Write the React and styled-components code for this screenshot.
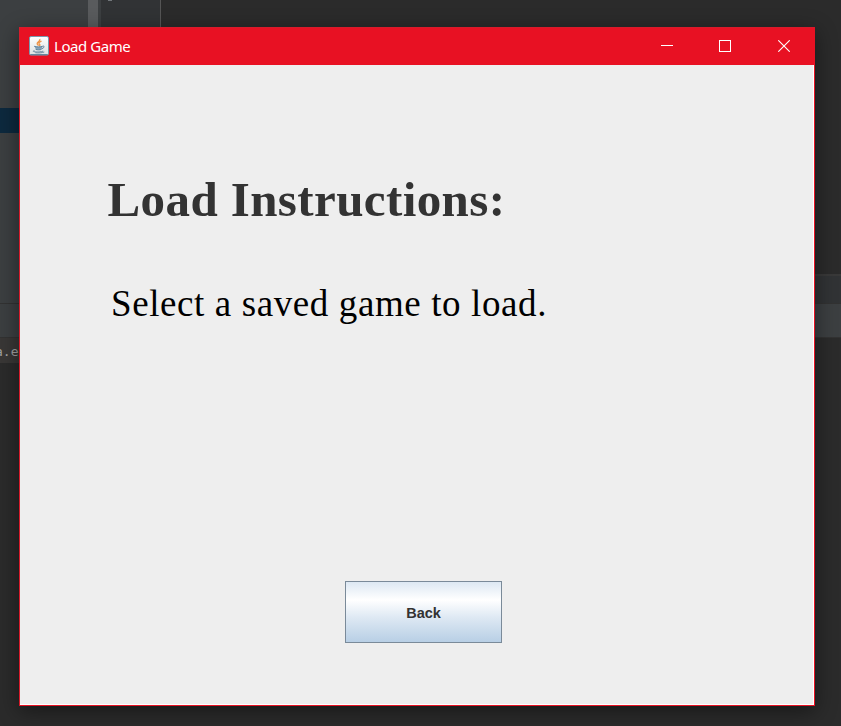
import React from "react";
import styled, { createGlobalStyle } from "styled-components";

const GlobalStyle = createGlobalStyle`
  * { box-sizing: border-box; }
  body { margin: 0; overflow: hidden; background: #2b2b2b; }
`;

const Desktop = styled.div`
  position: relative;
  width: 841px;
  height: 726px;
  overflow: hidden;
  background: #2b2b2b;
`;

const Workspace = styled.div`
  display: flex;
  height: 303px;
`;

const ProjectPanel = styled.div`
  width: 88px;
  padding-top: 108px;
  background: #3c3f41;
`;

const SelectedRow = styled.div`
  height: 25px;
  background: #0d293e;
`;

const Scrollbar = styled.div`
  width: 13px;
  background: #3c3f41;
  border-left: 10px solid #595b5d;
`;

const Gutter = styled.div`
  width: 60px;
  padding-left: 7px;
  background: #313335;
  border-right: 1px solid #555555;
`;

const GutterMark = styled.div`
  width: 4px;
  height: 1px;
  background: #71767a;
`;

const Editor = styled.div`
  flex: 1;
  display: flex;
  flex-direction: column;
  justify-content: flex-end;
`;

const Breadcrumbs = styled.div`
  height: 29px;
  background: #313335;
  border-top: 2px solid #393939;
`;

const ToolHeader = styled.div`
  height: 35px;
  background: #3c3f41;
  border-top: 1px solid #323232;
  border-bottom: 1px solid #323232;
`;

const Console = styled.div`
  width: 60px;
  height: 25px;
  overflow: hidden;
  background: #393736;
  color: #a1a1a1;
  font: 13px/28px "DejaVu Sans Mono", monospace;
  text-indent: -5px;
`;

const Window = styled.main`
  position: absolute;
  left: 19px;
  top: 27px;
  width: 796px;
  height: 679px;
  display: flex;
  flex-direction: column;
  border: 1px solid #e81123;
  border-color: #d81b2b #e81123 #e81123 #d81b2b;
  background: #eeeeee;
  box-shadow: 0 5px 20px rgba(0, 0, 0, 0.45);
`;

const TitleBar = styled.header`
  display: flex;
  align-items: center;
  height: 37px;
  flex: none;
  padding: 0 1px 1px 9px;
  background: #e81123;
  color: #ffffff;
`;

const Title = styled.span`
  margin-left: 5px;
  font: 15px/20px "Noto Sans", sans-serif;
  letter-spacing: -0.45px;
  flex: 1;
`;

const Control = styled.button`
  display: grid;
  place-items: center;
  width: 58.5px;
  height: 36px;
  padding: 0;
  border: 0;
  background: none;
`;

const Content = styled.section`
  flex: 1;
  display: flex;
  flex-direction: column;
  border-right: 1px solid #ffffff;
  border-bottom: 1px solid #ffffff;
`;

const Heading = styled.h1`
  margin: 107px 0 0 87.5px;
  color: #333333;
  font: bold 49px/56px "Liberation Serif", serif;
  letter-spacing: 0.4px;
`;

const Instruction = styled.p`
  margin: 55px 0 0 91px;
  color: #000000;
  font: 37px/42px "Liberation Serif", serif;
  letter-spacing: 0.6px;
`;

const BackButton = styled.button`
  width: 157px;
  height: 62px;
  margin: auto 0 61px 325px;
  padding: 1px 0 0;
  border: 1px solid #7a8a99;
  background: linear-gradient(#dde8f3 0%, #ffffff 30%, #dde8f3 60%, #b8cfe5 100%);
  color: #333333;
  font: bold 14.5px/20px "Liberation Sans", sans-serif;
`;

function JavaIcon() {
  return (
    <svg width="20" height="20" viewBox="0 0 20 20" fill="none">
      <defs>
        <linearGradient id="tile" x1="0" y1="0" x2="0" y2="1">
          <stop offset="0" stopColor="#ffffff" />
          <stop offset="1" stopColor="#dce1e3" />
        </linearGradient>
      </defs>
      <rect x=".5" y=".5" width="19" height="18.5" rx="1.5" fill="url(#tile)" stroke="#7899ad" />
      <path d="M1.5 18.7h17" stroke="#547c96" />
      <path d="M10.8 3c1.2 2.3-4.2 3.3-2.2 5.5l1 1.1M12.5 5.2c-3.5 1.5-2.8 2.3-1.8 3.3.5.6 0 1.2-.6 1.5" stroke="#ee9448" strokeWidth="1.3" />
      <path d="M5.5 10.3c2 .8 6.5.8 8 0l-.9 3c-1.5.7-4.2.7-5.8 0z" fill="#86a3b8" />
      <path d="M5.2 10.3c2 .9 6.7.7 8.3 0 2.2-1 2.3 1.5-.7 2.4M6.7 13.4c1.8.6 4.2.6 5.7 0" stroke="#5d819c" />
      <path d="M5.4 14.5c-4.5 1.4 5 2.2 8.8.6M6.3 16.7c3.4.4 6.5.2 9-.7" stroke="#6d8ba2" />
    </svg>
  );
}

export default function App() {
  return (
    <>
      <GlobalStyle />
      <Desktop>
        <Workspace>
          <ProjectPanel><SelectedRow /></ProjectPanel>
          <Scrollbar />
          <Gutter><GutterMark /></Gutter>
          <Editor><Breadcrumbs /></Editor>
        </Workspace>
        <ToolHeader />
        <Console>a.e</Console>
        <Window>
          <TitleBar>
            <JavaIcon />
            <Title>Load Game</Title>
            <Control aria-label="Minimize">
              <svg width="12" height="12" shapeRendering="crispEdges"><path d="M0 5.5h12" stroke="#fff" /></svg>
            </Control>
            <Control aria-label="Maximize">
              <svg width="12" height="12" shapeRendering="crispEdges"><path d="M.5.5h11v11H.5z" fill="none" stroke="#fff" /></svg>
            </Control>
            <Control aria-label="Close">
              <svg width="12" height="12"><path d="M.3.3l11.4 11.4M11.7.3L.3 11.7" stroke="#fff" strokeWidth="1.1" /></svg>
            </Control>
          </TitleBar>
          <Content>
            <Heading>Load Instructions:</Heading>
            <Instruction>Select a saved game to load.</Instruction>
            <BackButton>Back</BackButton>
          </Content>
        </Window>
      </Desktop>
    </>
  );
}
